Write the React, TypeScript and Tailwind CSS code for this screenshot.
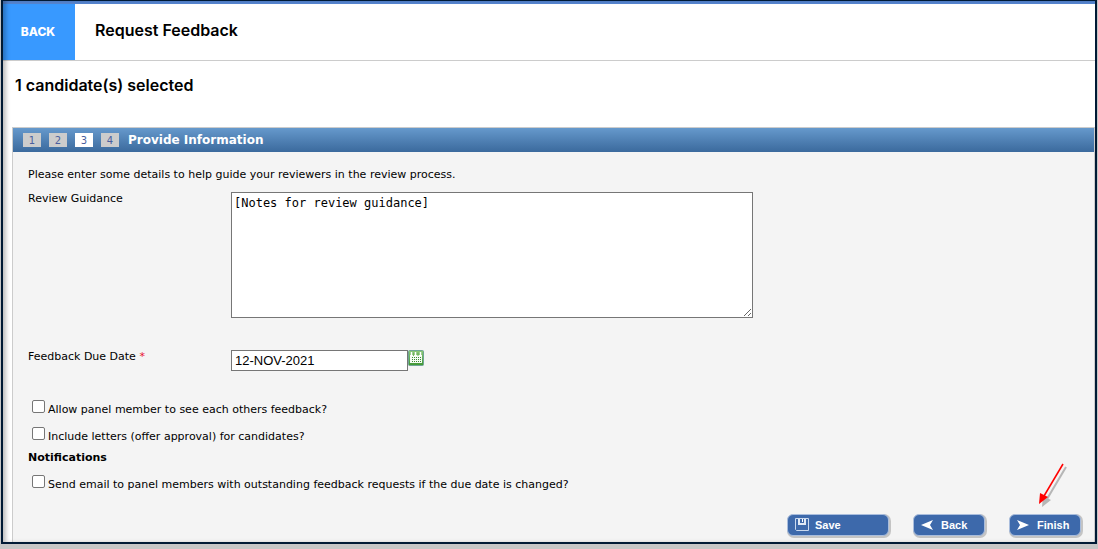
import React, { useState } from 'react';
import clsx from 'clsx';

interface OptionProps {
  id: string;
  label: string;
}

const steps = [1, 2, 3, 4];
const currentStep = 3;

const Option: React.FC<OptionProps> = ({ id, label }) => (
  <div className="flex items-start pl-1">
    <input
      id={id}
      type="checkbox"
      className="h-[13px] w-[13px] appearance-none rounded-[2px] border border-[#767676] bg-white checked:bg-[#0075ff]"
    />
    <label htmlFor={id} className="pt-[3px] pl-[3px]">
      {label}
    </label>
  </div>
);

const SaveIcon = () => (
  <svg width="14" height="14" viewBox="0 0 14 14" fill="none" aria-hidden="true">
    <path d="M.5 .5h13v12h-12l-1-1z" stroke="#c9d8ee" />
    <path d="M3 1h8v6H3z" fill="#dfe8f5" />
    <path d="M5 1h4v4H5z" fill="#3d69ab" />
    <path d="M7 1h1v3H7z" fill="#fff" />
  </svg>
);

const BackIcon = () => (
  <svg width="12" height="10" viewBox="0 0 12 10" aria-hidden="true">
    <path d="M0 5L12 0L9 5L12 10Z" fill="#fff" />
  </svg>
);

const FinishIcon = () => (
  <svg width="12" height="10" viewBox="0 0 12 10" aria-hidden="true">
    <path d="M12 5L0 0L3 5L0 10Z" fill="#fff" />
  </svg>
);

const CalendarIcon = () => (
  <svg width="16" height="16" viewBox="0 0 16 16" aria-hidden="true">
    <defs>
      <linearGradient id="calendar-green" x1="0" y1="0" x2="0" y2="1">
        <stop offset="0" stopColor="#8cc878" />
        <stop offset="1" stopColor="#3f9633" />
      </linearGradient>
    </defs>
    <rect x=".5" y=".5" width="15" height="15" rx="1" fill="url(#calendar-green)" stroke="#6fa596" />
    <path d="M2 5h12v8H2z" fill="#f4fbf2" />
    <path d="M3.5 2v4M7.5 2v4M12.5 2v4" stroke="#fff" strokeWidth="1.5" />
    <path d="M5.5 3v3M10 3v3" stroke="#6db35c" />
    <path d="M4 7.5h9M4 9.5h9M4 11.5h9" stroke="#3c8a33" strokeDasharray="1 1" />
  </svg>
);

const buttonClass =
  'flex h-[22px] items-center rounded-[6px] border border-[#a9bddd] bg-[#3d69ab] font-["Liberation_Sans",Arial,sans-serif] text-[11px] font-bold text-white shadow-[1px_1px_0_1px_#c4c4c4]';

const App: React.FC = () => {
  const [guidance, setGuidance] = useState('[Notes for review guidance]');
  const [dueDate, setDueDate] = useState('12-NOV-2021');

  return (
    <div className='min-h-screen bg-[#c6c6c6] pr-px pl-px font-["DejaVu_Sans",Verdana,sans-serif] text-[11px] leading-[14px] text-black'>
      <div className="relative border-x-2 border-t border-b-2 border-[#001a35] bg-white">
        <div className="h-[3px] bg-[#5585d0]" />
        <header className='flex h-[57px] items-stretch border-b border-[#ccc] font-["Inter",sans-serif]'>
          <button type="button" className="w-[72px] bg-[#3899ff] pr-[2px] text-[12px] font-extrabold text-white">
            BACK
          </button>
          <h1 className="pt-[14px] pl-5 text-[16px] leading-6 font-semibold">Request Feedback</h1>
        </header>
        <p className='px-3 pt-3 pb-[30px] font-["Inter",sans-serif] text-[16px] leading-6 font-semibold'>
          1 candidate(s) selected
        </p>

        <main className="ml-[9px] border border-b-0 border-[#ccc] bg-[#f4f4f4]">
          <div className="flex h-6 items-center bg-linear-to-b from-[#6699cc] to-[#3b6a9d] pl-[10px]">
            <ol className="flex gap-2 text-[10px]">
              {steps.map((step) => (
                <li
                  key={step}
                  className={clsx(
                    'h-[14px] w-[18px] pt-px text-center text-[#4a5f9e]',
                    step === currentStep ? 'bg-white' : 'bg-[#ccc]'
                  )}
                >
                  {step}
                </li>
              ))}
            </ol>
            <h2 className="pl-[9px] text-[12px] font-bold text-white">Provide Information</h2>
          </div>

          <form className="px-[15px] pt-4 pb-[6px]" onSubmit={(e) => e.preventDefault()}>
            <p>Please enter some details to help guide your reviewers in the review process.</p>

            <div className="mt-[10px] flex">
              <label htmlFor="guidance" className="w-[203px] shrink-0">
                Review Guidance
              </label>
              <textarea
                id="guidance"
                value={guidance}
                onChange={(e) => setGuidance(e.target.value)}
                className='h-[126px] w-full max-w-[522px] border border-[#767676] bg-white px-[2px] pt-[3px] font-["DejaVu_Sans_Mono",monospace] text-[12px] leading-[14px]'
              />
            </div>

            <div className="mt-8 flex">
              <label htmlFor="due-date" className="w-[203px] shrink-0">
                Feedback Due Date <span className="text-[#e8112d]">*</span>
              </label>
              <input
                id="due-date"
                type="text"
                value={dueDate}
                onChange={(e) => setDueDate(e.target.value)}
                className='h-[21px] w-[177px] border border-[#767676] bg-white px-[3px] font-["Liberation_Sans",Arial,sans-serif] text-[13px]'
              />
              <button type="button" aria-label="Choose date" className="h-4 w-4">
                <CalendarIcon />
              </button>
            </div>

            <div className="mt-[29px] flex flex-col gap-[10px]">
              <Option id="see-feedback" label="Allow panel member to see each others feedback?" />
              <Option id="include-letters" label="Include letters (offer approval) for candidates?" />
            </div>
            <h3 className="mt-[7px] mb-[10px] font-bold">Notifications</h3>
            <Option
              id="send-email"
              label="Send email to panel members with outstanding feedback requests if the due date is changed?"
            />

            <div className="-mr-[2px] mt-[22px] flex justify-end gap-6">
              <button type="button" className={clsx(buttonClass, 'w-[102px] gap-[6px] pl-[7px]')}>
                <SaveIcon />
                Save
              </button>
              <button type="button" className={clsx(buttonClass, 'w-[72px] gap-2 pl-[7px]')}>
                <BackIcon />
                Back
              </button>
              <button type="submit" className={clsx(buttonClass, 'w-[72px] gap-2 pl-[7px]')}>
                <FinishIcon />
                Finish
              </button>
            </div>
          </form>
        </main>

        {/* edge shade inside the frame */}
        <div className="pointer-events-none absolute inset-0 shadow-[inset_4px_0_4px_-1px_rgba(0,0,0,0.25)]" />

        {/* arrow pointing at Finish */}
        <svg
          className="pointer-events-none absolute right-6 bottom-[34px]"
          width="34"
          height="46"
          viewBox="0 0 34 46"
          aria-hidden="true"
        >
          <g opacity=".25" transform="translate(3 3)">
            <path d="M26 2L7 34" stroke="#000" strokeWidth="2" />
            <path d="M2 42L3 31L11 35Z" fill="#000" />
          </g>
          <path d="M26 2L7 34" stroke="#f00" strokeWidth="1.5" />
          <path d="M2 42L3 31L11 35Z" fill="#f00" />
        </svg>
      </div>
    </div>
  );
};

export default App;
